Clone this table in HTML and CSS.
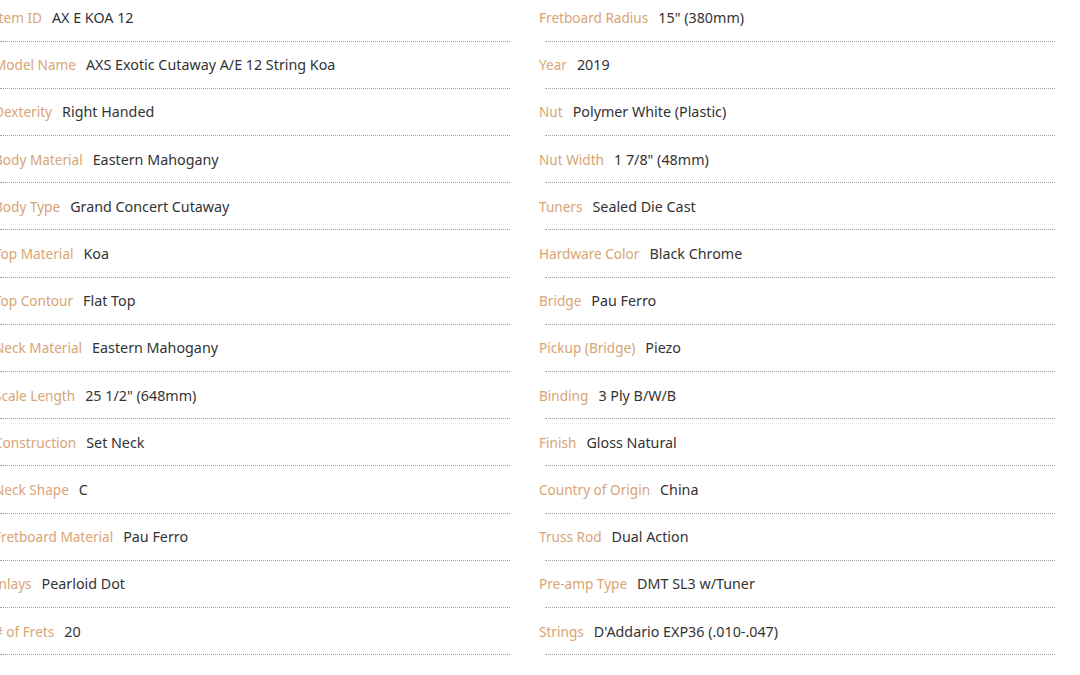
FILE: index.html
```html
<!DOCTYPE html>
<html>
<head>
<meta charset="utf-8">
<link rel="stylesheet" href="styles.css">
</head>
<body>
<div class="specs">
  <ul class="col">
    <li class="row"><span class="label">Item ID</span><span class="value">AX E KOA 12</span></li>
    <li class="row"><span class="label">Model Name</span><span class="value">AXS Exotic Cutaway A/E 12 String Koa</span></li>
    <li class="row"><span class="label">Dexterity</span><span class="value">Right Handed</span></li>
    <li class="row"><span class="label">Body Material</span><span class="value">Eastern Mahogany</span></li>
    <li class="row"><span class="label">Body Type</span><span class="value">Grand Concert Cutaway</span></li>
    <li class="row"><span class="label">Top Material</span><span class="value">Koa</span></li>
    <li class="row"><span class="label">Top Contour</span><span class="value">Flat Top</span></li>
    <li class="row"><span class="label">Neck Material</span><span class="value">Eastern Mahogany</span></li>
    <li class="row"><span class="label">Scale Length</span><span class="value">25 1/2" (648mm)</span></li>
    <li class="row"><span class="label">Construction</span><span class="value">Set Neck</span></li>
    <li class="row"><span class="label">Neck Shape</span><span class="value">C</span></li>
    <li class="row"><span class="label">Fretboard Material</span><span class="value">Pau Ferro</span></li>
    <li class="row"><span class="label">Inlays</span><span class="value">Pearloid Dot</span></li>
    <li class="row"><span class="label"># of Frets</span><span class="value">20</span></li>
  </ul>
  <ul class="col">
    <li class="row"><span class="label">Fretboard Radius</span><span class="value">15" (380mm)</span></li>
    <li class="row"><span class="label">Year</span><span class="value">2019</span></li>
    <li class="row"><span class="label">Nut</span><span class="value">Polymer White (Plastic)</span></li>
    <li class="row"><span class="label">Nut Width</span><span class="value">1 7/8" (48mm)</span></li>
    <li class="row"><span class="label">Tuners</span><span class="value">Sealed Die Cast</span></li>
    <li class="row"><span class="label">Hardware Color</span><span class="value">Black Chrome</span></li>
    <li class="row"><span class="label">Bridge</span><span class="value">Pau Ferro</span></li>
    <li class="row"><span class="label">Pickup (Bridge)</span><span class="value">Piezo</span></li>
    <li class="row"><span class="label">Binding</span><span class="value">3 Ply B/W/B</span></li>
    <li class="row"><span class="label">Finish</span><span class="value">Gloss Natural</span></li>
    <li class="row"><span class="label">Country of Origin</span><span class="value">China</span></li>
    <li class="row"><span class="label">Truss Rod</span><span class="value">Dual Action</span></li>
    <li class="row"><span class="label">Pre-amp Type</span><span class="value">DMT SL3 w/Tuner</span></li>
    <li class="row"><span class="label">Strings</span><span class="value">D'Addario EXP36 (.010-.047)</span></li>
  </ul>
</div>
</body>
</html>
```
FILE: styles.css
```css
html, body {
  margin: 0;
  padding: 0;
  background: #ffffff;
  overflow: hidden;
}
body {
  font-family: "Noto Sans", "Liberation Sans", sans-serif;
  font-size: 14px;
  color: #333333;
}
.specs {
  display: grid;
  grid-template-columns: 510px 510px;
  column-gap: 35px;
  margin-top: -5.5px;
}
.col {
  list-style: none;
  margin: 0;
  padding: 0;
}
.row {
  height: 47.2px;
  box-sizing: border-box;
  border-bottom: 1px dotted #a0a0a0;
  display: flex;
  align-items: center;
  white-space: nowrap;
}
.label {
  color: #d8a475;
  font-size: 13.6px;
  margin-left: -6px;
  margin-right: 10px;
}
.value {
  color: #333333;
  font-size: 14.3px;
}
```
